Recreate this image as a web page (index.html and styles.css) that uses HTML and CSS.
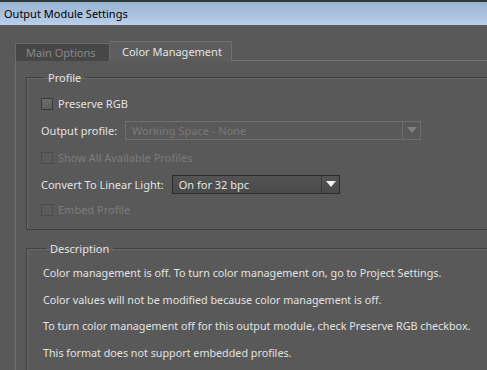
FILE: index.html
```html
<!DOCTYPE html>
<html lang="en">

<head>
  <meta charset="UTF-8">
  <title>Output Module Settings</title>
  <link rel="stylesheet" href="styles.css">
</head>

<body>
  <div class="titlebar">Output Module Settings</div>

  <div class="dialog">
    <div class="tabs">
      <div class="tab">Main Options</div>
      <div class="tab active">Color Management</div>
      <div class="tab-rest"></div>
    </div>

    <div class="panel">
      <fieldset class="group profile">
        <legend>Profile</legend>

        <div class="row">
          <span class="check"></span>
          <span>Preserve RGB</span>
        </div>

        <div class="row">
          <span class="label">Output profile:</span>
          <div class="select disabled wide">
            <span class="value">Working Space - None</span>
            <span class="arrow"></span>
          </div>
        </div>

        <div class="row disabled-row">
          <span class="check off"></span>
          <span>Show All Available Profiles</span>
        </div>

        <div class="row">
          <span class="label">Convert To Linear Light:</span>
          <div class="select narrow">
            <span class="value">On for 32 bpc</span>
            <span class="arrow"></span>
          </div>
        </div>

        <div class="row short disabled-row">
          <span class="check off"></span>
          <span>Embed Profile</span>
        </div>
      </fieldset>

      <fieldset class="group description">
        <legend>Description</legend>
        <p>Color management is off. To turn color management on, go to Project Settings.</p>
        <p>Color values will not be modified because color management is off.</p>
        <p>To turn color management off for this output module, check Preserve RGB checkbox.</p>
        <p>This format does not support embedded profiles.</p>
      </fieldset>
    </div>
  </div>
</body>

</html>
```

FILE: styles.css
```css
body {
  margin: 0;
  background: #595959;
  font-family: 'Noto Sans', sans-serif;
  font-size: 11px;
  color: #e2e2e2;
  overflow: hidden;
  width: 487px;
  height: 370px;
}

.titlebar {
  height: 23px;
  border-top: 2px solid #2e3933;
  background: linear-gradient(to bottom, #9ab2d2, #b9cfea);
  color: #000;
  font-size: 11px;
  line-height: 23px;
  padding-left: 4px;
}

.dialog {
  padding-top: 16px;
  padding-left: 15px;
}

.tabs {
  display: flex;
  align-items: flex-end;
  height: 20px;
}

.tab {
  box-sizing: border-box;
  width: 95px;
  height: 18px;
  line-height: 17px;
  padding-left: 10px;
  background: #474747;
  border: 1px solid #6a6a6a;
  border-bottom: none;
  color: #888;
  font-size: 11px;
  white-space: nowrap;
}

.tab.active {
  width: 122px;
  height: 20px;
  line-height: 19px;
  padding-left: 12px;
  background: #5d5d5d;
  border-color: #707070;
  border-left: none;
  color: #e4e4e4;
}

.tab-rest {
  flex: 1;
  border-bottom: 1px solid #727272;
}

.panel {
  border-left: 1px solid #707070;
  padding: 9px 0 0 10px;
}

.group {
  margin: 0;
  border: 1px solid #404040;
  border-right: none;
  box-shadow: inset 1px 1px 0 #6a6a6a;
  padding: 0 0 0 14px;
}

.group legend {
  padding: 0 4px;
  margin-left: 3px;
  font-size: 11px;
  color: #e4e4e4;
}

.profile {
  height: 153px;
  padding-top: 5px;
}

.row {
  display: flex;
  align-items: center;
  height: 27px;
}

.row.short {
  height: 23px;
}

.label {
  margin-right: 8px;
}

.check {
  width: 10px;
  height: 10px;
  border: 1px solid #383838;
  background: linear-gradient(to bottom, #6c6c6c, #5e5e5e);
  margin: 0 5px 0 0;
}

.check.off {
  background: #5a5a5a;
  border-color: #4c4c4c;
}

.disabled-row {
  color: #7c7c7c;
}

.select {
  display: flex;
  align-items: center;
  height: 16px;
  border: 1px solid #2c2c2c;
  background: linear-gradient(to bottom, #545454, #4a4a4a);
  color: #e6e6e6;
}

.select .value {
  flex: 1;
  padding-left: 6px;
}

.select .arrow {
  width: 17px;
  height: 100%;
  border-left: 1px solid #3a3a3a;
  position: relative;
}

.select .arrow::after {
  content: "";
  position: absolute;
  left: 4px;
  top: 5px;
  border-left: 5px solid transparent;
  border-right: 5px solid transparent;
  border-top: 6px solid #f0f0f0;
}

.select.wide {
  width: 294px;
  height: 17px;
  border-color: #6e6e6e;
  background: #595959;
  color: #7a7a7a;
}

.select.wide .arrow {
  border-left-color: #6e6e6e;
}

.select.wide .arrow::after {
  border-top-color: #808080;
}

.select.narrow {
  width: 166px;
  height: 17px;
}

.description {
  margin-top: 11px;
  padding: 4px 0 0 16px;
  height: 140px;
}

.description p {
  margin: 0;
  height: 26.7px;
  line-height: 26.7px;
  font-size: 10.75px;
  white-space: nowrap;
}
```
